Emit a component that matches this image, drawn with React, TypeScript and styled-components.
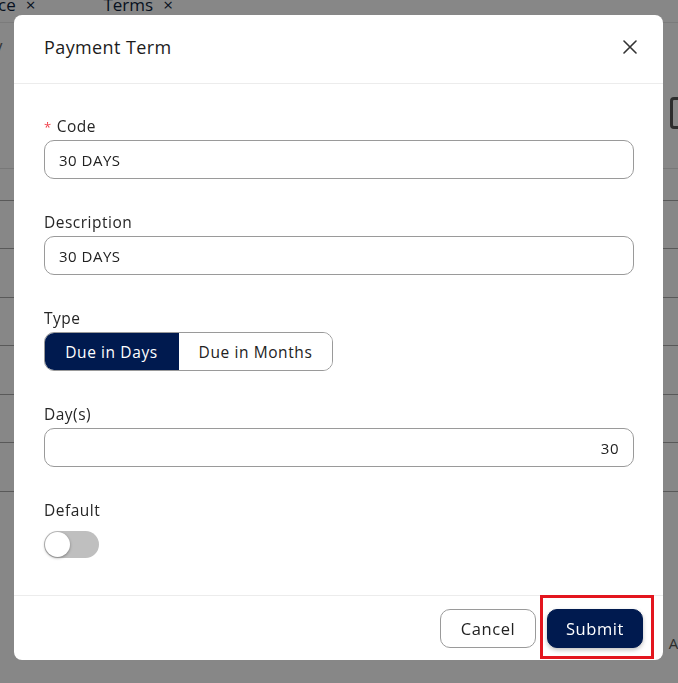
import React, { useState } from "react";
import styled, { createGlobalStyle } from "styled-components";

const NAVY = "#001a4f";
const FONT = `"Open Sans", "Noto Sans", Arial, sans-serif`;

const Global = createGlobalStyle`
  html, body { margin: 0; padding: 0; }
  body {
    width: 678px;
    height: 683px;
    overflow: hidden;
    background: #ffffff;
    font-family: ${FONT};
  }
  * { box-sizing: border-box; }
`;

/* ---------- underlying page (dimmed by overlay) ---------- */
const Page = styled.div`
  width: 678px;
  height: 683px;
  overflow: hidden;
  display: flex;
  flex-direction: column;
  background: #ffffff;
  color: #333;
`;

const TabBar = styled.div`
  display: flex;
  gap: 68px;
  height: 36px;
  margin-top: -13px;
  margin-left: -2px;
  border-bottom: 1px solid #e8e8e8;
  font-size: 17px;
  align-items: center;
`;

const Tab = styled.span`
  display: inline-flex;
  gap: 10px;
  align-items: center;
  color: #0f1f3d;
`;

const Toolbar = styled.div`
  height: 145px;
  display: flex;
  justify-content: space-between;
  align-items: flex-start;
  padding-top: 14px;
`;

const ToolbarGlyph = styled.span`
  font-size: 18px;
  color: #666;
  margin-left: -4px;
`;

const ToolbarButton = styled.span`
  width: 14px;
  height: 32px;
  margin-top: 60px;
  margin-right: -6px;
  border-radius: 4px;
  border: 3px solid #555;
`;

const Table = styled.div`
  display: flex;
  flex-direction: column;
  border-top: 1px solid #e2e2e2;
`;

const TableRow = styled.div<{ $h: number }>`
  height: ${(p) => p.$h}px;
  border-bottom: 1px solid #a8a8a8;
`;

const Footnote = styled.div`
  margin-top: auto;
  margin-bottom: 30px;
  align-self: flex-end;
  margin-right: -4px;
  font-size: 15px;
  color: #555;
`;

const Overlay = styled.div`
  position: fixed;
  inset: 0;
  background: rgba(0, 0, 0, 0.47);
`;

/* ---------- modal ---------- */
const Modal = styled.div`
  position: fixed;
  top: 15px;
  left: 14px;
  width: 649px;
  background: #fff;
  border-radius: 8px;
  display: flex;
  flex-direction: column;
  color: #222;
  letter-spacing: 0.35px;
`;

const Header = styled.div`
  height: 69px;
  padding: 0 21px 4px 30px;
  display: flex;
  align-items: center;
  justify-content: space-between;
  border-bottom: 1px solid #ececec;
`;

const Title = styled.h2`
  margin: 0;
  font-size: 18px;
  font-weight: 500;
  color: #1c1c1c;
  letter-spacing: 0.4px;
`;

const CloseButton = styled.button`
  width: 24px;
  height: 24px;
  border: none;
  background: transparent;
  padding: 0;
  display: flex;
  align-items: center;
  justify-content: center;
  cursor: pointer;
  color: #333;
`;

const Body = styled.div`
  padding: 31px 29px 37px 30px;
  display: flex;
  flex-direction: column;
  gap: 32px;
  border-bottom: 1px solid #ececec;
`;

const Field = styled.div`
  display: flex;
  flex-direction: column;
  align-items: flex-start;
  gap: 3px;
`;

const Label = styled.label`
  height: 22px;
  line-height: 22px;
  font-size: 15.5px;
  letter-spacing: 0.5px;
  color: #262626;
  display: inline-flex;
  gap: 5px;
  align-items: center;
`;

const Required = styled.span`
  color: #f0424c;
  font-size: 13px;
  margin-top: 2px;
`;

const Input = styled.input<{ $align?: "left" | "right" }>`
  width: 100%;
  height: 39px;
  border: 1px solid #9a9a9a;
  border-radius: 10px;
  padding: 0 14px;
  font-family: ${FONT};
  font-size: 15px;
  letter-spacing: 0.5px;
  color: #222;
  text-align: ${(p) => p.$align ?? "left"};
  outline: none;
  background: #fff;
`;

const Segmented = styled.div`
  display: inline-flex;
  height: 39px;
  border: 1px solid #9a9a9a;
  border-radius: 10px;
  overflow: hidden;
`;

const Segment = styled.button<{ $active?: boolean; $w: number }>`
  width: ${(p) => p.$w}px;
  border: none;
  margin: -1px 0;
  padding: 0;
  white-space: nowrap;
  font-family: ${FONT};
  font-size: 15.5px;
  letter-spacing: 0.6px;
  background: ${(p) => (p.$active ? NAVY : "#fff")};
  color: ${(p) => (p.$active ? "#fff" : "#222")};
  cursor: pointer;
  &:first-child {
    margin-left: -1px;
  }
`;

const Switch = styled.button<{ $on: boolean }>`
  margin-top: 7px;
  width: 55px;
  height: 27px;
  border-radius: 14px;
  border: none;
  padding: 1px;
  display: flex;
  justify-content: ${(p) => (p.$on ? "flex-end" : "flex-start")};
  background: ${(p) => (p.$on ? NAVY : "#bfbfbf")};
  cursor: pointer;
`;

const Knob = styled.span`
  width: 25px;
  height: 25px;
  border-radius: 50%;
  background: #fff;
  box-shadow: 0 1px 3px rgba(0, 0, 0, 0.35);
`;

const Footer = styled.div`
  height: 64px;
  padding: 0 20px 0 0;
  display: flex;
  justify-content: flex-end;
  align-items: center;
  gap: 11px;
`;

const Button = styled.button<{ $primary?: boolean }>`
  position: relative;
  width: 96px;
  height: 39px;
  border-radius: 10px;
  font-family: ${FONT};
  font-size: 16.5px;
  letter-spacing: 0.6px;
  font-weight: ${(p) => (p.$primary ? 500 : 400)};
  border: 1px solid ${(p) => (p.$primary ? NAVY : "#9a9a9a")};
  background: ${(p) => (p.$primary ? NAVY : "#fff")};
  color: ${(p) => (p.$primary ? "#fff" : "#222")};
  box-shadow: ${(p) => (p.$primary ? "0 2px 4px rgba(0,0,0,0.25)" : "none")};
  cursor: pointer;
`;

const Highlight = styled.span`
  position: absolute;
  top: -15px;
  left: -8px;
  right: -12px;
  bottom: -12px;
  border: 3px solid #e3161e;
  pointer-events: none;
`;

const rows = [32, 48, 49, 48, 49, 48, 49];

export default function App() {
  const [type, setType] = useState<"days" | "months">("days");
  const [on, setOn] = useState(false);
  return (
    <>
      <Global />
      <Page>
        <TabBar>
          <Tab>ce <span>×</span></Tab>
          <Tab>Terms <span>×</span></Tab>
        </TabBar>
        <Toolbar>
          <ToolbarGlyph>/</ToolbarGlyph>
          <ToolbarButton />
        </Toolbar>
        <Table>
          {rows.map((h, i) => (
            <TableRow key={i} $h={h} />
          ))}
        </Table>
        <Footnote>Al</Footnote>
      </Page>
      <Overlay />
      <Modal role="dialog" aria-label="Payment Term">
        <Header>
          <Title>Payment Term</Title>
          <CloseButton aria-label="Close">
            <svg width="14" height="14" viewBox="0 0 14 14">
              <path d="M1 1L13 13M13 1L1 13" stroke="currentColor" strokeWidth="1.6" strokeLinecap="round" />
            </svg>
          </CloseButton>
        </Header>
        <Body>
          <Field>
            <Label><Required>*</Required>Code</Label>
            <Input defaultValue="30 DAYS" />
          </Field>
          <Field>
            <Label>Description</Label>
            <Input defaultValue="30 DAYS" />
          </Field>
          <Field>
            <Label>Type</Label>
            <Segmented>
              <Segment $w={135} $active={type === "days"} onClick={() => setType("days")}>Due in Days</Segment>
              <Segment $w={153} $active={type === "months"} onClick={() => setType("months")}>Due in Months</Segment>
            </Segmented>
          </Field>
          <Field>
            <Label>Day(s)</Label>
            <Input defaultValue="30" $align="right" />
          </Field>
          <Field>
            <Label>Default</Label>
            <Switch $on={on} onClick={() => setOn(!on)} aria-label="Default">
              <Knob />
            </Switch>
          </Field>
        </Body>
        <Footer>
          <Button>Cancel</Button>
          <Button $primary>
            Submit
            <Highlight />
          </Button>
        </Footer>
      </Modal>
    </>
  );
}
